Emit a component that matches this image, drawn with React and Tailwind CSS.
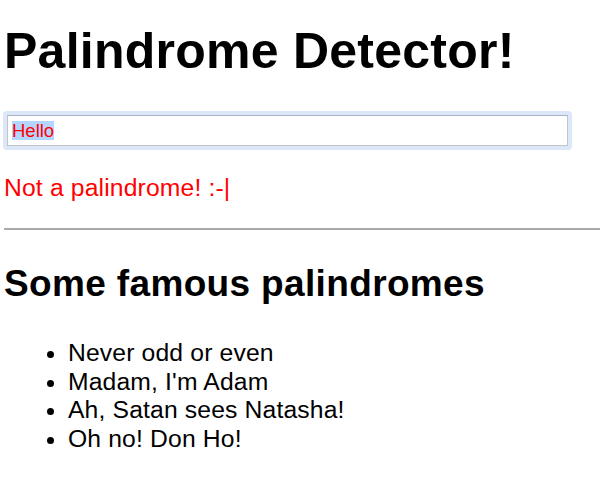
export default function App() {
  const items = [
    "Never odd or even",
    "Madam, I'm Adam",
    "Ah, Satan sees Natasha!",
    "Oh no! Don Ho!",
  ];
  return (
    <div className="min-h-[477px] bg-white pl-[4px] pt-[22px] text-black font-['Liberation_Sans',Arial,sans-serif]">
      <h1 className="text-[50px] font-bold leading-[58px] tracking-[0.25px] m-0">Palindrome Detector!</h1>
      <div className="mt-[31px] -ml-px w-[569px] rounded-[4px] bg-[#dce7fa] p-[4px]">
        <div className="flex h-[31px] items-center border border-[#c4c4c4] border-t-[#a9b3c2] bg-white pl-[4px]">
          <span className="bg-[#b4d5fe] text-[18.5px] leading-[19px] text-[#ff0000]">Hello</span>
        </div>
      </div>
      <p className="mt-[24px] text-[24.7px] leading-[28px] tracking-[0.15px] text-[#ff0000]">Not a palindrome! :-|</p>
      <div className="mt-[26px] h-[2px] bg-[#a9a9a9]" />
      <h2 className="mt-[33px] text-[37px] font-bold leading-[42px] tracking-[0.35px]">Some famous palindromes</h2>
      <ul className="mt-[34px] list-disc pl-[64px] text-[24.7px] leading-[28.5px] tracking-[0.15px]">
        {items.map((t) => (
          <li key={t}>{t}</li>
        ))}
      </ul>
    </div>
  );
}
